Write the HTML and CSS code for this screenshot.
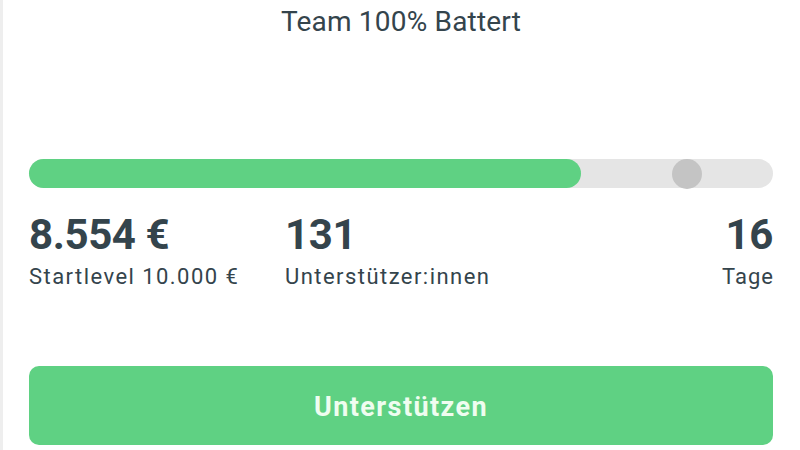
FILE: index.html
```html
<!DOCTYPE html>
<html lang="de">
<head>
<meta charset="utf-8">
<link rel="stylesheet" href="styles.css">
</head>
<body>
<div class="page">
  <h1 class="title">Team 100% Battert</h1>
  <div class="progress">
    <div class="fill" style="width: 74.2%"></div>
    <div class="knob"></div>
  </div>
  <div class="stats">
    <div class="stat">
      <div class="value">8.554 €</div>
      <div class="label">Startlevel 10.000 €</div>
    </div>
    <div class="stat">
      <div class="value">131</div>
      <div class="label">Unterstützer:innen</div>
    </div>
    <div class="stat right">
      <div class="value">16</div>
      <div class="label">Tage</div>
    </div>
  </div>
  <button class="cta">Unterstützen</button>
</div>
</body>
</html>
```
FILE: styles.css
```css
html, body {
  margin: 0;
  padding: 0;
  background: #ffffff;
}
body {
  font-family: Roboto, "Liberation Sans", sans-serif;
  color: #34444c;
  width: 800px;
  height: 450px;
  overflow: hidden;
}
.page {
  box-sizing: border-box;
  height: 450px;
  border-left: 3px solid #eeeeee;
  padding: 0 27px 0 26px;
  display: flex;
  flex-direction: column;
}
.title {
  margin: 4px 0 0 0;
  font-size: 28px;
  font-weight: 400;
  line-height: 36px;
  text-align: center;
  color: #34444c;
  letter-spacing: 0.2px;
}
.progress {
  position: relative;
  margin-top: 119px;
  height: 29px;
  border-radius: 15px;
  background: #e5e5e5;
}
.fill {
  height: 100%;
  border-radius: 15px;
  background: #5fd183;
}
.knob {
  position: absolute;
  left: 643px;
  top: 0;
  width: 30px;
  height: 30px;
  border-radius: 50%;
  background: #c4c4c4;
}
.stats {
  display: grid;
  grid-template-columns: 256px 1fr auto;
  margin-top: 22px;
}
.stat.right {
  text-align: right;
}
.stat.right .label {
  letter-spacing: 1px;
  margin-right: -1px;
}
.value {
  font-size: 42px;
  font-weight: 700;
  line-height: 50px;
  letter-spacing: -0.4px;
}
.label {
  font-size: 22px;
  line-height: 28px;
  margin-top: 3px;
  letter-spacing: 1.45px;
}
.cta {
  margin-top: 75px;
  height: 79px;
  border: none;
  border-radius: 10px;
  background: #5fd183;
  color: #effdf0;
  font-family: Roboto, "Liberation Sans", sans-serif;
  font-size: 27px;
  font-weight: 700;
  letter-spacing: 1.4px;
  padding-top: 3px;
}
```
